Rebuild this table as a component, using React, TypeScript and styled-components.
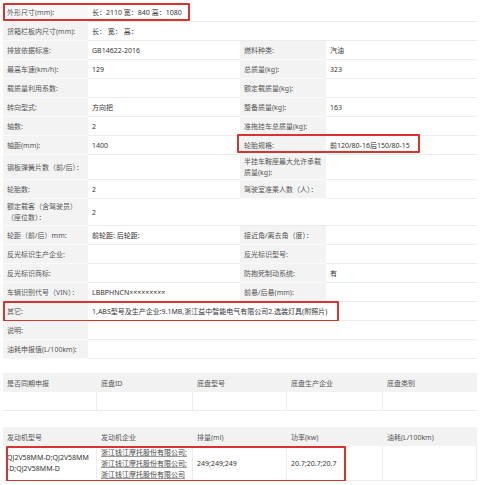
import React from "react";
import styled, { createGlobalStyle } from "styled-components";

const Global = createGlobalStyle`
  html, body { margin: 0; padding: 0; background: #ffffff; }
  body { font-family: "Noto Sans", "Noto Sans CJK SC", sans-serif; }
`;

const Page = styled.div`
  width: 474px;
  padding: 3px 3px 0 3px;
  color: #333;
  font-size: 7px;
`;

const SpecTable = styled.div`
  display: flex;
  flex-direction: column;
`;

const Row = styled.div<{ $h?: number }>`
  position: relative;
  display: grid;
  grid-template-columns: 85px 152px 86px 151px;
  height: ${(p) => p.$h ?? 19}px;
`;

const Label = styled.div<{ $light?: boolean; $blank?: boolean }>`
  display: flex;
  align-items: center;
  box-sizing: border-box;
  padding: 0 4px;
  background: ${(p) => (p.$blank ? "#ffffff" : p.$light ? "#f8f8f8" : "#f3f3f3")};
  border-bottom: 1px solid ${(p) => (p.$blank ? "#ececec" : "#fafafa")};
  color: #555;
  line-height: 11px;
`;

const Value = styled.div<{ $span?: boolean }>`
  display: flex;
  align-items: center;
  box-sizing: border-box;
  padding: 0 4px;
  background: #ffffff;
  border-bottom: 1px solid #ececec;
  color: #333;
  white-space: nowrap;
  grid-column: ${(p) => (p.$span ? "span 3" : "auto")};
`;

const Mark = styled.div<{ $left: number; $width: number; $top: number; $bottom: number }>`
  position: absolute;
  left: ${(p) => p.$left}px;
  width: ${(p) => p.$width}px;
  top: ${(p) => p.$top}px;
  bottom: ${(p) => p.$bottom}px;
  border: 2px solid #d8332e;
  border-radius: 1px;
  box-sizing: border-box;
  pointer-events: none;
`;

const Grid = styled.div<{ $mt: number }>`
  margin-top: ${(p) => p.$mt}px;
  display: flex;
  flex-direction: column;
`;

const GridRow = styled.div<{ $h: number }>`
  position: relative;
  display: grid;
  grid-template-columns: 94px 96px 94px 96px 94px;
  height: ${(p) => p.$h}px;
`;

const Head = styled.div`
  display: flex;
  align-items: center;
  padding: 0 4px;
  background: #f2f2f2;
  color: #555;
`;

const Cell = styled.div<{ $breakAll?: boolean }>`
  display: flex;
  align-items: center;
  box-sizing: border-box;
  padding: 0 ${(p) => (p.$breakAll ? 6 : 3)}px 0 4px;
  background: #ffffff;
  border-right: 1px solid #ececec;
  border-bottom: 1px solid #ececec;
  color: #333;
  line-height: 11px;
  word-break: ${(p) => (p.$breakAll ? "break-all" : "normal")};
  &:last-child { border-right: none; }
`;

const Lines = styled.div`
  display: flex;
  flex-direction: column;
`;

const Linked = styled.span`
  color: #444;
  text-decoration: underline;
  text-decoration-color: #999;
  white-space: nowrap;
`;

type Pair = [string, string, string, string];

const pairs: Pair[] = [
  ["排放依据标准:", "GB14622-2016", "燃料种类:", "汽油"],
  ["最高车速(km/h):", "129", "总质量(kg):", "323"],
  ["载质量利用系数:", "", "额定载质量(kg):", ""],
  ["转向型式:", "方向把", "整备质量(kg):", "163"],
  ["轴数:", "2", "准拖挂车总质量(kg):", ""],
];

const pairs2: Pair[] = [
  ["轮距（前/后）mm:", "前轮距: 后轮距:", "接近角/离去角（度）：", ""],
  ["反光标识生产企业:", "", "反光标识型号:", ""],
  ["反光标识商标:", "", "防抱死制动系统:", "有"],
  ["车辆识别代号（VIN）：", "LBBPHNCN×××××××××", "前悬/后悬(mm):", ""],
];

const PairRow = ({ p }: { p: Pair }) => (
  <Row>
    <Label>{p[0]}</Label>
    <Value>{p[1]}</Value>
    <Label>{p[2]}</Label>
    <Value>{p[3]}</Value>
  </Row>
);

export default function App() {
  return (
    <>
      <Global />
      <Page>
        <SpecTable>
          <Row>
            <Label $light>外形尺寸(mm):</Label>
            <Value $span>长：2110 宽：840 高：1080</Value>
            <Mark $left={0} $width={187} $top={0} $bottom={1} />
          </Row>
          <Row>
            <Label>货箱栏板内尺寸(mm):</Label>
            <Value $span>长： 宽： 高：</Value>
          </Row>
          {pairs.map((p) => (
            <PairRow key={p[0]} p={p} />
          ))}
          <Row>
            <Label>轴距(mm):</Label>
            <Value>1400</Value>
            <Label>轮胎规格:</Label>
            <Value>前120/80-16后150/80-15</Value>
            <Mark $left={234} $width={183} $top={-2} $bottom={2} />
          </Row>
          <Row $h={25}>
            <Label>钢板弹簧片数（前/后）：</Label>
            <Value />
            <Label>半挂车鞍座最大允许承载质量(kg):</Label>
            <Value />
          </Row>
          <Row>
            <Label>轮胎数:</Label>
            <Value>2</Value>
            <Label>驾驶室准乘人数（人）：</Label>
            <Value />
          </Row>
          <Row $h={27}>
            <Label>额定载客（含驾驶员）（座位数）：</Label>
            <Value>2</Value>
            <Label $blank />
            <Value />
          </Row>
          {pairs2.map((p) => (
            <PairRow key={p[0]} p={p} />
          ))}
          <Row>
            <Label>其它:</Label>
            <Value $span>1,ABS型号及生产企业:9.1MB,浙江益中智能电气有限公司2.选装灯具(附照片)</Value>
            <Mark $left={0} $width={336} $top={-1} $bottom={-1} />
          </Row>
          <Row>
            <Label>说明:</Label>
            <Value $span />
          </Row>
          <Row>
            <Label>油耗申报值(L/100km):</Label>
            <Value $span />
          </Row>
        </SpecTable>

        <Grid $mt={14}>
          <GridRow $h={19}>
            <Head>是否同期申报</Head>
            <Head>底盘ID</Head>
            <Head>底盘型号</Head>
            <Head>底盘生产企业</Head>
            <Head>底盘类别</Head>
          </GridRow>
          <GridRow $h={19}>
            <Cell />
            <Cell />
            <Cell />
            <Cell />
            <Cell />
          </GridRow>
        </Grid>

        <Grid $mt={16}>
          <GridRow $h={19}>
            <Head>发动机型号</Head>
            <Head>发动机企业</Head>
            <Head>排量(ml)</Head>
            <Head>功率(kw)</Head>
            <Head>油耗(L/100km)</Head>
          </GridRow>
          <GridRow $h={35}>
            <Cell $breakAll>QJ2V58MM-D;QJ2V58MM-D;QJ2V58MM-D</Cell>
            <Cell>
              <Lines>
                <Linked>浙江钱江摩托股份有限公司;</Linked>
                <Linked>浙江钱江摩托股份有限公司;</Linked>
                <Linked>浙江钱江摩托股份有限公司</Linked>
              </Lines>
            </Cell>
            <Cell>249;249;249</Cell>
            <Cell>20.7;20.7;20.7</Cell>
            <Cell />
            <Mark $left={3} $width={340} $top={0} $bottom={-1} />
          </GridRow>
        </Grid>
      </Page>
    </>
  );
}
